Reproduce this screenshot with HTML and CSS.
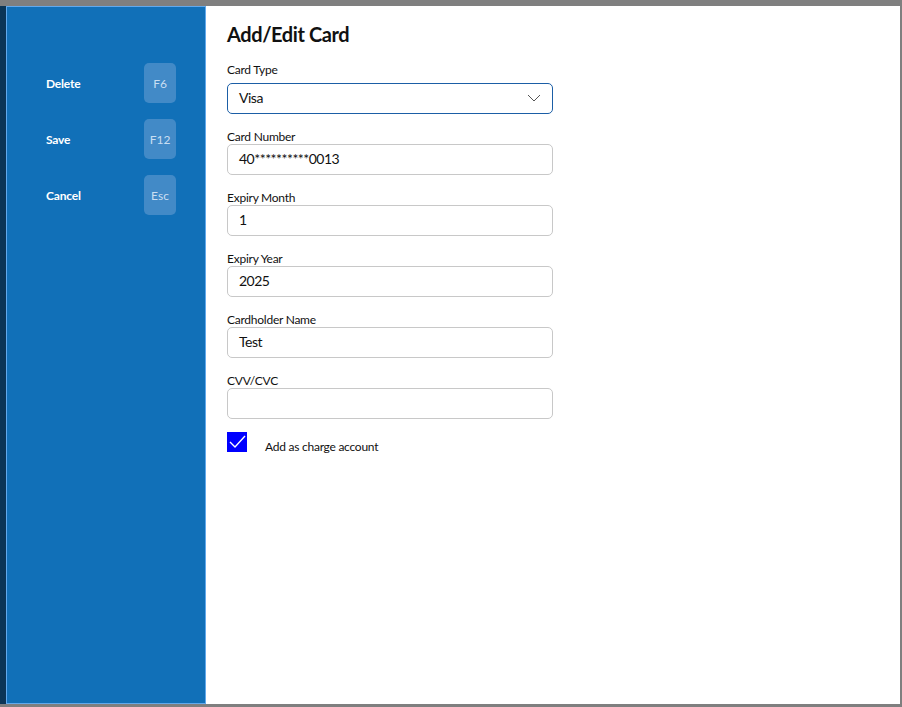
FILE: index.html
```html
<!DOCTYPE html>
<html>
<head>
<meta charset="utf-8">
<link rel="stylesheet" href="styles.css">
</head>
<body>
<div class="screen">
  <div class="strip"></div>
  <div class="modal">
    <aside class="sidebar">
      <div class="action"><span class="action-label">Delete</span><span class="key">F6</span></div>
      <div class="action"><span class="action-label">Save</span><span class="key">F12</span></div>
      <div class="action"><span class="action-label">Cancel</span><span class="key">Esc</span></div>
    </aside>
    <main class="content">
      <h1 class="title">Add/Edit Card</h1>
      <div class="field">
        <label class="label">Card Type</label>
        <div class="select">
          <span>Visa</span>
          <svg class="chev" width="14" height="8" viewBox="0 0 14 8"><path d="M1 1 L7 7 L13 1" fill="none" stroke="#555" stroke-width="1"/></svg>
        </div>
      </div>
      <div class="field">
        <label class="label">Card Number</label>
        <div class="input">40**********0013</div>
      </div>
      <div class="field">
        <label class="label">Expiry Month</label>
        <div class="input">1</div>
      </div>
      <div class="field">
        <label class="label">Expiry Year</label>
        <div class="input">2025</div>
      </div>
      <div class="field">
        <label class="label">Cardholder Name</label>
        <div class="input">Test</div>
      </div>
      <div class="field">
        <label class="label">CVV/CVC</label>
        <div class="input"></div>
      </div>
      <div class="check-row">
        <span class="checkbox"><svg width="20" height="20" viewBox="0 0 20 20"><path d="M3 10 L8 15 L18 4" fill="none" stroke="#fff" stroke-width="1.4"/></svg></span>
        <span class="check-label">Add as charge account</span>
      </div>
    </main>
  </div>
</div>
</body>
</html>
```

FILE: styles.css
```css
* { box-sizing: border-box; }
html, body { margin: 0; padding: 0; }
body {
  background: #7f7f7f;
  font-family: Lato, "Noto Sans", sans-serif;
  width: 902px;
  height: 707px;
  overflow: hidden;
}
.screen {
  display: flex;
  padding: 6px 2px 3px 0;
  height: 707px;
}
.strip {
  width: 6px;
  background: #0b3556;
}
.modal {
  flex: 1;
  display: flex;
  background: #fff;
}
.sidebar {
  width: 200px;
  background: #1170b8;
  border: 1px solid #62a9ec;
  padding-top: 56px;
  padding-left: 39px;
  display: flex;
  flex-direction: column;
  gap: 16px;
}
.action {
  display: flex;
  align-items: center;
  width: 130px;
  justify-content: space-between;
  height: 40px;
}
.action-label {
  color: #fff;
  font-size: 12px;
  font-weight: 700;
  letter-spacing: -0.2px;
}
.key {
  width: 32px;
  height: 40px;
  border-radius: 5px;
  background: #428ac7;
  color: #c9def2;
  font-size: 12px;
  display: flex;
  align-items: center;
  justify-content: center;
}
.content {
  flex: 1;
  padding: 16px 0 0 21px;
}
.title {
  margin: 0 0 17px 0;
  font-size: 20px;
  font-weight: 700;
  color: #111;
  line-height: 24px;
  letter-spacing: -0.4px;
}
.field {
  display: flex;
  flex-direction: column;
  width: 326px;
  margin-bottom: 16px;
}
.label {
  font-size: 12px;
  color: #111;
  line-height: 14px;
  letter-spacing: -0.25px;
}
.input, .select {
  height: 31px;
  border: 1px solid #c8c8c8;
  border-radius: 5px;
  padding: 0 11px 2px 11px;
  display: flex;
  align-items: center;
  font-size: 14px;
  color: #111;
  letter-spacing: -0.5px;
}
.select {
  margin-top: 6px;
  border-color: #1b5ea6;
  justify-content: space-between;
}
.check-row {
  display: flex;
  align-items: center;
  margin-top: -3px;
  height: 20px;
}
.checkbox {
  width: 20px;
  height: 20px;
  background: #0000ff;
  display: flex;
}
.check-label {
  margin-left: 18px;
  margin-top: 9px;
  font-size: 12px;
  color: #111;
  letter-spacing: -0.25px;
}
```
